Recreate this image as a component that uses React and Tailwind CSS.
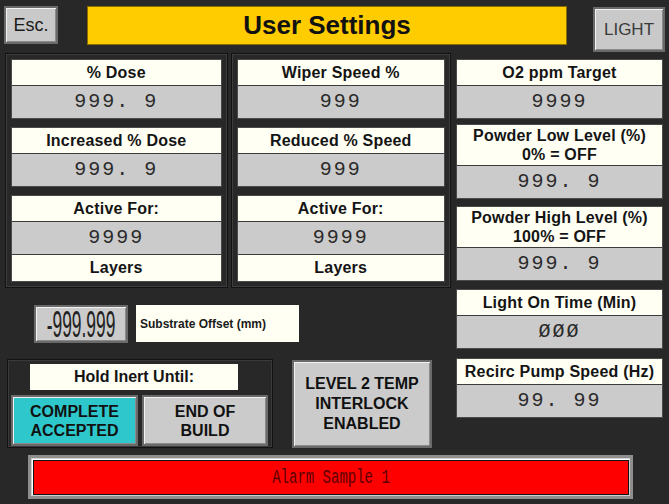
const bevel =
  "border-2 border-[#6a6a6a] shadow-[inset_1px_1px_0_#f2f2f2,inset_-1px_-1px_0_#8a8a8a]";

function Value({ children }) {
  return (
    <div className="h-[32px] bg-[#cbcbcb] flex items-center justify-center font-['Liberation_Mono',monospace] text-[20px] tracking-[2px] text-[#2a2a2a]">
      {children}
    </div>
  );
}

function Label({ children, h = "h-[26px]" }) {
  return (
    <div
      className={`${h} bg-[#fffff4] flex items-center justify-center text-center text-[16px] font-bold tracking-[0.2px] leading-[19px] text-[#141414] border-b border-[#3c3c3c]`}
    >
      {children}
    </div>
  );
}

function Field({ label, value, h }) {
  return (
    <div className="border border-[#4a4a4a] flex flex-col">
      <Label h={h}>{label}</Label>
      <Value>{value}</Value>
    </div>
  );
}

function LayerField({ value }) {
  return (
    <div className="border border-[#4a4a4a] flex flex-col">
      <Label>Active For:</Label>
      <div className="border-b border-[#3c3c3c]">
        <Value>{value}</Value>
      </div>
      <div className="h-[26px] bg-[#fffff4] flex items-center justify-center text-[16px] font-bold tracking-[0.2px] text-[#141414]">
        Layers
      </div>
    </div>
  );
}

function Panel({ children, w }) {
  return (
    <div
      className={`${w} h-[235px] border border-[#121212] shadow-[inset_0_0_0_1px_#3e3e3e] p-[5px] flex flex-col gap-[8px]`}
    >
      {children}
    </div>
  );
}

export default function App() {
  return (
    <div className="w-[669px] h-[504px] bg-[#282828] overflow-hidden font-['Liberation_Sans',Arial,sans-serif] text-[#141414]">
      {/* header */}
      <div className="h-[53px] flex items-start pt-[6px] pl-[4px]">
        <div
          className={`w-[54px] h-[38px] bg-[#c9c9c9] ${bevel} flex items-center justify-center text-[18px] text-[#1a1a1a]`}
        >
          Esc.
        </div>
        <div className="ml-[29px] w-[480px] h-[39px] bg-[#ffcc00] border border-[#8a6f00] flex items-center justify-center text-[26px] font-bold text-[#111]">
          User Settings
        </div>
        <div
          className={`ml-[26px] mt-[1px] w-[72px] h-[45px] bg-[#c9c9c9] ${bevel} flex items-center justify-center text-[17px] text-[#3a3a3a]`}
        >
          LIGHT
        </div>
      </div>

      <div className="flex">
        {/* left area */}
        <div className="w-[451px] flex flex-col">
          <div className="flex pl-[5px] gap-[3px]">
            <Panel w="w-[223px]">
              <Field label="% Dose" value="999. 9" />
              <Field label="Increased % Dose" value="999. 9" />
              <LayerField value="9999" />
            </Panel>
            <Panel w="w-[221px]">
              <Field label="Wiper Speed %" value="999" />
              <Field label="Reduced % Speed" value="999" />
              <LayerField value="9999" />
            </Panel>
          </div>

          {/* substrate offset */}
          <div className="flex items-start mt-[17px] pl-[34px] h-[38px]">
            <div
              className={`w-[94px] h-[38px] bg-[#cbcbcb] ${bevel} flex items-center justify-center overflow-hidden`}
            >
              <span className="inline-block scale-x-[0.47] text-[37px] leading-none text-[#222] whitespace-nowrap">
                -999.999
              </span>
            </div>
            <div className="ml-[8px] w-[163px] h-[37px] bg-[#fffff4] flex items-center pl-[4px] text-[12px] font-bold text-[#1a1a1a]">
              Substrate Offset (mm)
            </div>
          </div>

          {/* hold inert + interlock */}
          <div className="flex items-start mt-[16px] pl-[7px]">
            <div className="w-[266px] h-[89px] border border-[#121212] shadow-[inset_0_0_0_1px_#3a3a3a] flex flex-col pt-[4px] px-[3px]">
              <div className="ml-[19px] w-[208px] h-[26px] bg-[#fffff4] flex items-center justify-center text-[16px] font-bold">
                Hold Inert Until:
              </div>
              <div className="flex gap-[4px] mt-[5px]">
                <div
                  className={`w-[127px] h-[51px] bg-[#2ec8cc] ${bevel} flex items-center justify-center text-center text-[16px] font-bold leading-[19px] text-[#111]`}
                >
                  COMPLETE
                  <br />
                  ACCEPTED
                </div>
                <div
                  className={`w-[126px] h-[51px] bg-[#cbcbcb] ${bevel} flex items-center justify-center text-center text-[16px] font-bold leading-[19px] text-[#111]`}
                >
                  END OF
                  <br />
                  BUILD
                </div>
              </div>
            </div>
            <div
              className={`ml-[19px] mt-[1px] w-[140px] h-[88px] bg-[#cbcbcb] ${bevel} flex items-center justify-center text-center text-[16px] font-bold leading-[20px] text-[#111]`}
            >
              LEVEL 2 TEMP
              <br />
              INTERLOCK
              <br />
              ENABLED
            </div>
          </div>
        </div>

        {/* right column */}
        <div className="ml-[5px] w-[207px] pt-[6px] flex flex-col">
          <Field label="O2 ppm Target" value="9999" />
          <div className="mt-[5px]">
            <Field
              h="h-[41px]"
              label={
                <span>
                  Powder Low Level (%)
                  <br />
                  0% = OFF
                </span>
              }
              value="999. 9"
            />
          </div>
          <div className="mt-[7px]">
            <Field
              h="h-[41px]"
              label={
                <span>
                  Powder High Level (%)
                  <br />
                  100% = OFF
                </span>
              }
              value="999. 9"
            />
          </div>
          <div className="mt-[8px]">
            <Field label="Light On Time (Min)" value="ØØØ" />
          </div>
          <div className="mt-[9px]">
            <Field label="Recirc Pump Speed (Hz)" value="99. 99" />
          </div>
        </div>
      </div>

      {/* alarm banner */}
      <div className="mt-[7px] ml-[28px] w-[605px] h-[44px] border-[3px] border-[#8e8e8e] bg-[#cfcfcf] p-[1px]">
        <div className="w-full h-full border-t border-l border-white">
          <div className="w-full h-full bg-[#ff0000] border border-[#111] flex items-center justify-center">
            <span className="inline-block scale-y-[1.45] font-['Liberation_Mono',monospace] text-[14px] text-[#5a0000]">
              Alarm Sample 1
            </span>
          </div>
        </div>
      </div>
    </div>
  );
}
